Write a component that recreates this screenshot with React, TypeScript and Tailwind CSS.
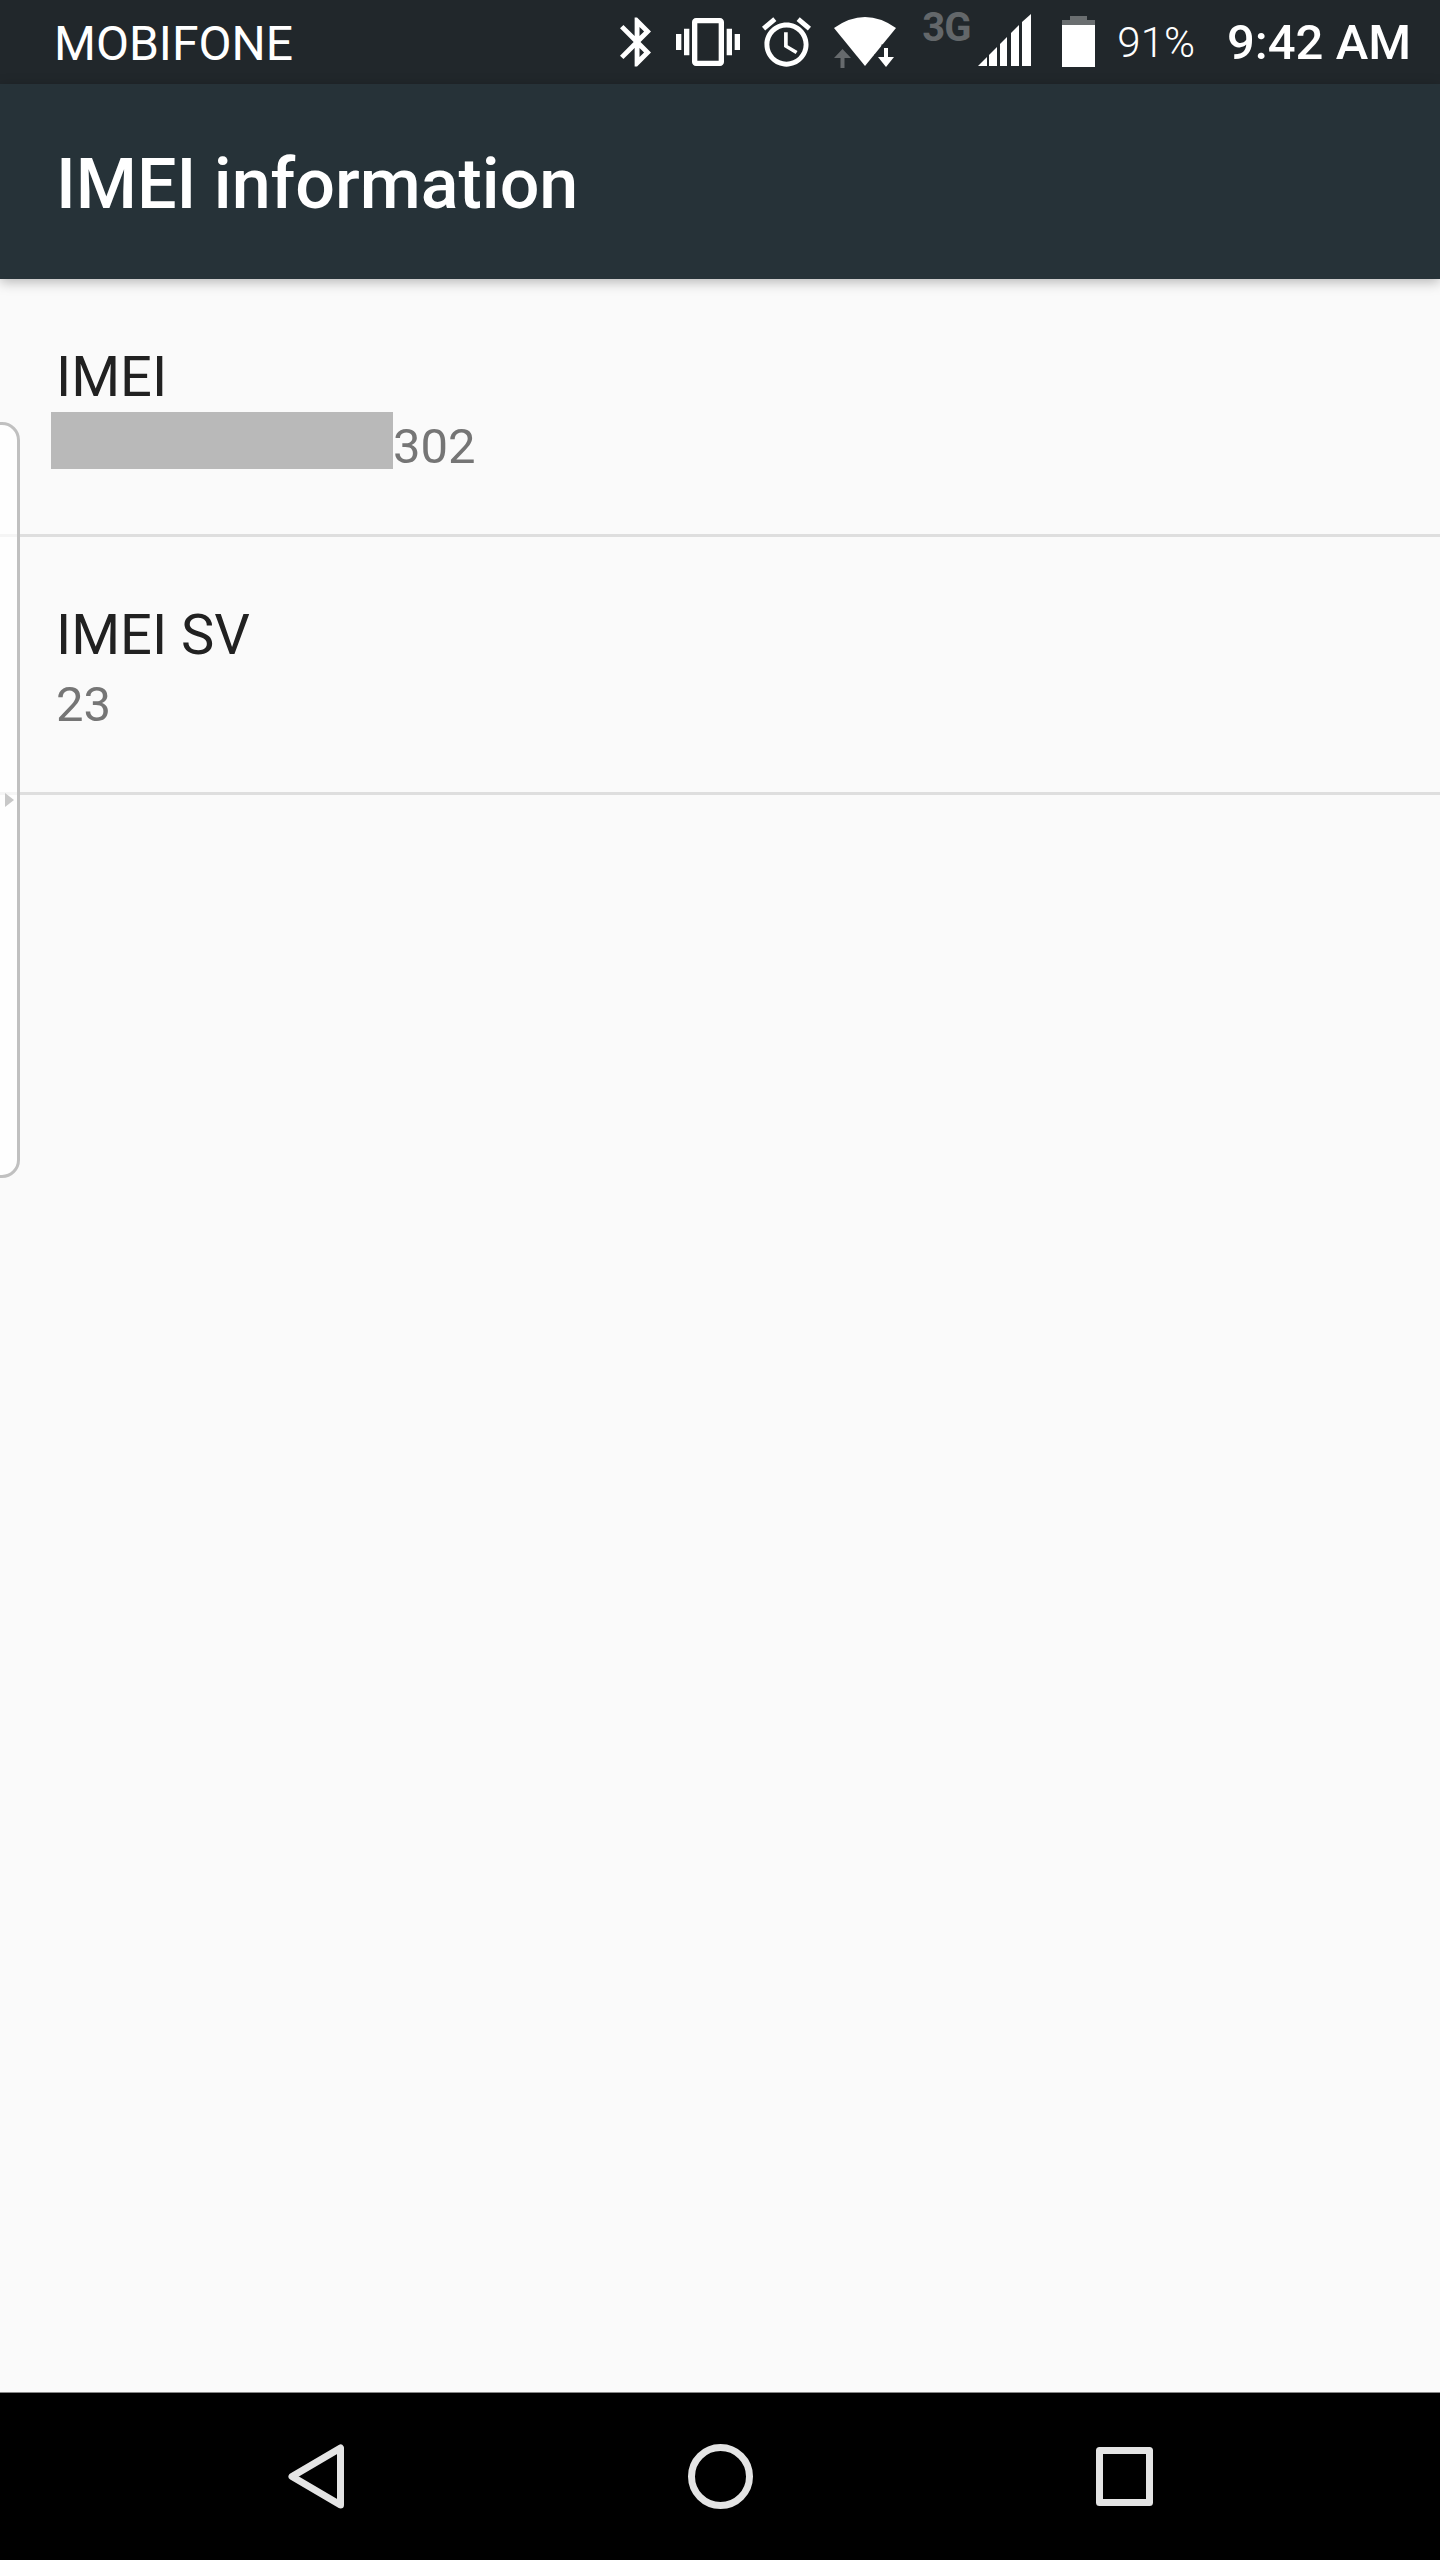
import React from 'react'

const roboto = "font-['Roboto',sans-serif]"

function StatusIcons() {
  return (
    <div className="ml-auto flex items-start pr-[29px]">
      {/* bluetooth */}
      <svg width="31" height="50" viewBox="5 2 12.71 20" className="mt-[17px]" fill="#fff">
        <path d="M17.71 7.71L12 2h-1v7.59L6.41 5 5 6.41 10.59 12 5 17.59 6.41 19 11 14.41V22h1l5.71-5.71-4.3-4.29 4.3-4.29zM13 5.83l1.88 1.88L13 9.59V5.83zm1.88 10.46L13 18.17v-3.76l1.88 1.88z" />
      </svg>
      {/* vibrate */}
      <svg width="64" height="48" viewBox="0 3 24 18" className="ml-[25px] mt-[18px]" fill="#fff">
        <path d="M0 15h2V9H0v6zm3 2h2V7H3v10zm19-8v6h2V9h-2zm-3 8h2V7h-2v10zM16.5 3h-9C6.67 3 6 3.67 6 4.5v15c0 .83.67 1.5 1.5 1.5h9c.83 0 1.5-.67 1.5-1.5v-15c0-.83-.67-1.5-1.5-1.5zM16 19H8V5h8v14z" />
      </svg>
      {/* alarm */}
      <svg width="49" height="50" viewBox="2 1.86 20 20.14" className="ml-[22px] mt-[17px]" fill="#fff">
        <path d="M22 5.72l-4.6-3.86-1.29 1.53 4.6 3.86L22 5.72zM7.88 3.39L6.6 1.86 2 5.71l1.29 1.53 4.59-3.85zM12.5 8H11v6l4.75 2.85.75-1.23-4-2.37V8zM12 4c-4.97 0-9 4.03-9 9s4.03 9 9 9c4.97 0 9-4.03 9-9s-4.03-9-9-9zm0 16c-3.87 0-7-3.13-7-7s3.13-7 7-7 7 3.13 7 7-3.13 7-7 7z" />
      </svg>
      {/* wifi with activity arrows */}
      <svg width="64" height="52" viewBox="0 0 64 52" className="ml-[22px] mt-[17px]">
        <path d="M1 11 Q32 -11 63 11 L32 49 Z" fill="#fff" />
        <path d="M50 29h5v10h7l-9 12-9-12h6z" fill="#21272b" stroke="#21272b" strokeWidth="3" />
        <path d="M51 31h4v9h6l-8 10-8-10h6z" fill="#fff" />
        <path d="M7.500 51V41H1l8.500-9L18 41h-6.500v10z" fill="#666a6d" />
      </svg>
      {/* network type */}
      <span className={`${roboto} ml-[25px] mt-[6px] w-[44px] text-[40px] leading-[44px] font-bold tracking-[-1px] text-[#63676a]`}>
        3G
      </span>
      {/* signal */}
      <svg width="53" height="52" viewBox="0 0 53 52" className="ml-[12px] mt-[14px]" fill="#fff">
        <polygon points="0,52 9,52 9,43" />
        <polygon points="11,52 19,52 19,33 11,41" />
        <polygon points="22,52 29,52 29,23 22,30" />
        <polygon points="33,52 41,52 41,11 33,19" />
        <polygon points="44,52 53,52 53,0 44,8" />
      </svg>
      {/* battery */}
      <div className="ml-[31px] mt-[16px] flex w-[33px] flex-col items-center">
        <div className="h-[4px] w-[17px] bg-[#6a6e70]" />
        <div className="h-[5px] w-full bg-[#6a6e70]" />
        <div className="h-[42px] w-full bg-white" />
      </div>
      <span className={`${roboto} ml-[22px] mt-[20px] text-[42px] leading-[46px] font-light text-white`}>91%</span>
      <span className={`${roboto} ml-[32px] mt-[15px] text-[49px] leading-[56px] font-medium text-white`}>9:42 AM</span>
    </div>
  )
}

function InfoRow({ title, children }: { title: string; children: React.ReactNode }) {
  return (
    <div className="h-[258px] border-b-[3px] border-[#dedede] pl-[56px] pt-[65px]">
      <div className={`${roboto} text-[56px] leading-[66px] text-[#212121]`}>{title}</div>
      <div className={`${roboto} mt-[2px] flex h-[57px] items-center text-[49px] leading-[57px] text-[#757575]`}>{children}</div>
    </div>
  )
}

export default function App() {
  return (
    <div className="relative flex h-[2560px] w-[1440px] flex-col overflow-hidden bg-[#fafafa]">
      <div className="flex h-[84px] shrink-0 bg-[#21272b]">
        <span className={`${roboto} ml-[54px] mt-[16px] text-[48px] leading-[56px] font-normal text-white`}>MOBIFONE</span>
        <StatusIcons />
      </div>

      <div className="relative z-10 flex h-[195px] shrink-0 items-center bg-[#263238] pl-[56px] shadow-[0_3px_12px_rgba(0,0,0,0.28)]">
        <h1 className={`${roboto} mt-[5px] text-[70px] leading-[80px] font-medium text-white`}>IMEI information</h1>
      </div>

      <div className="flex-1">
        <InfoRow title="IMEI">
          <span className="-ml-[5px] h-[57px] w-[342px] bg-[#b9b9b9]" />
          <span className="mt-[12px]">302</span>
        </InfoRow>
        <InfoRow title="IMEI SV">
          <span className="mt-[12px]">23</span>
        </InfoRow>
      </div>

      {/* edge panel handle floating over the list */}
      <div className="absolute left-[-10px] top-[422px] flex h-[756px] w-[30px] items-center rounded-r-[18px] border-[3px] border-[#c0c0c0] bg-white/70 pl-[12px]">
        <svg width="9" height="14" viewBox="0 0 9 14" fill="#c8c8c8">
          <polygon points="0,0 9,7 0,14" />
        </svg>
      </div>

      <div className="flex h-[168px] shrink-0 items-center justify-center border-t border-[#888] bg-black">
        <div className="flex w-[404px] justify-center">
          <svg width="56" height="65" viewBox="0 0 56 65" fill="none" stroke="#e4e4e4" strokeWidth="7" strokeLinejoin="round">
            <polygon points="4,32.500 52.500,4 52.500,61" />
          </svg>
        </div>
        <div className="flex w-[404px] justify-center">
          <svg width="65" height="65" viewBox="0 0 65 65" fill="none" stroke="#e4e4e4" strokeWidth="7">
            <circle cx="32.500" cy="32.500" r="29" />
          </svg>
        </div>
        <div className="flex w-[404px] justify-center">
          <svg width="57" height="59" viewBox="0 0 57 59" fill="none" stroke="#e4e4e4" strokeWidth="7" strokeLinejoin="round">
            <rect x="3.500" y="3.500" width="50" height="52" />
          </svg>
        </div>
      </div>
    </div>
  )
}
